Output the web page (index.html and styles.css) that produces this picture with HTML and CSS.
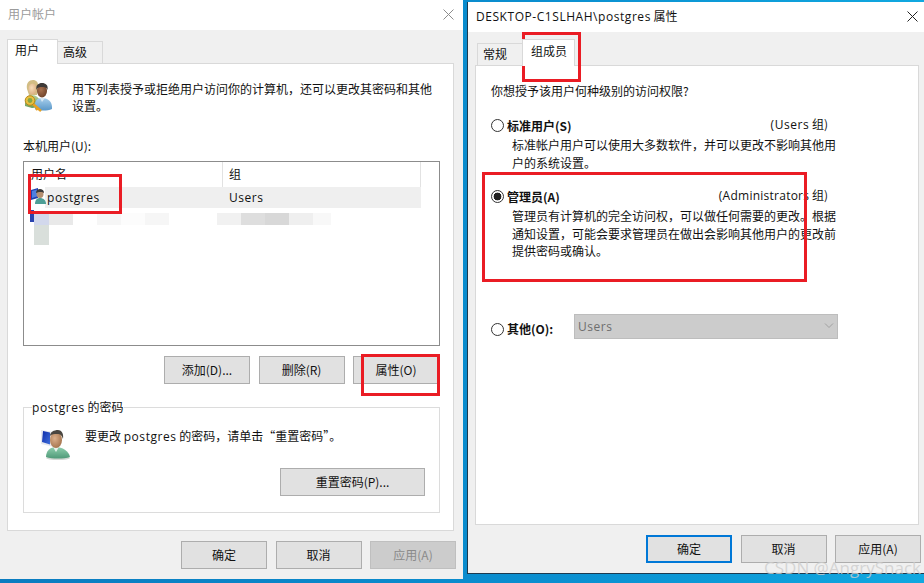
FILE: index.html
```html
<!DOCTYPE html>
<html lang="zh-CN">
<head>
<meta charset="utf-8">
<title>用户帐户</title>
<link rel="stylesheet" href="styles.css">
</head>
<body>
<div class="desktop">

  <section class="window win-users">
    <header class="titlebar titlebar-off">
      <span class="title">用户帐户</span>
      <svg class="close" width="11" height="11" viewBox="0 0 11 11"><path d="M.5.5l10 10M10.500.5l-10 10" stroke="#8c8c8c" fill="none"/></svg>
    </header>
    <div class="dialog">
      <div class="tabs">
        <div class="tab tab-on tab-users">用户</div>
        <div class="tab tab-adv">高级</div>
      </div>
      <div class="panel panel-users">
        <div class="intro">
          <svg class="icon-users" width="33" height="33" viewBox="0 0 33 33">
            <defs>
              <linearGradient id="shirtB" x1="0" y1="0" x2="0" y2="1"><stop offset="0" stop-color="#a8cfec"/><stop offset="1" stop-color="#5a97c8"/></linearGradient>
              <linearGradient id="shirtG" x1="0" y1="0" x2="0" y2="1"><stop offset="0" stop-color="#b4d29a"/><stop offset="1" stop-color="#6c9c58"/></linearGradient>
              <radialGradient id="skinA" cx=".4" cy=".4" r=".7"><stop offset="0" stop-color="#f6dcba"/><stop offset="1" stop-color="#d8ac7c"/></radialGradient>
              <radialGradient id="skinB" cx=".4" cy=".4" r=".7"><stop offset="0" stop-color="#a87250"/><stop offset="1" stop-color="#6a4028"/></radialGradient>
            </defs>
            <path d="M2 23c0-5 3-8 7-8s8 3 8 8v4l-8 1-7-2z" fill="url(#shirtG)"/>
            <path d="M4 9c-1-6 2-9 6-9 3 0 6 2 5 8l-1 7H6z" fill="#d2bd84"/>
            <ellipse cx="9.500" cy="9" rx="4" ry="5.500" fill="url(#skinA)"/>
            <path d="M12 29c-1-8 2-11 7-11s10 3 10 9v2c-5 2-12 2-17 0z" fill="url(#shirtB)"/>
            <path d="M17 18l2 4 3-4z" fill="#d8e8f4"/>
            <ellipse cx="19" cy="11" rx="5" ry="6.500" fill="url(#skinB)"/>
            <path d="M13.500 10c-1-5 2-7 5.500-7s6.500 2 5.500 7c-1-3-3-3-5.500-3s-4.500 0-5.500 3z" fill="#3e3a38"/>
            <path d="M10 24l8 7M15 28l-2 2" stroke="#e8a020" stroke-width="2.400" fill="none"/>
            <circle cx="7" cy="20.500" r="4.800" fill="#e8c040" stroke="#b8891c"/>
            <circle cx="7" cy="20.500" r="2.400" fill="#86a646"/>
          </svg>
          <p class="intro-text">用下列表授予或拒绝用户访问你的计算机，还可以更改其密码和其他设置。</p>
        </div>
        <div class="list-label">本机用户(U):</div>
        <div class="listview">
          <div class="lv-head">
            <div class="col-name">用户名</div>
            <div class="col-group">组</div>
          </div>
          <div class="lv-row">
            <svg class="icon-small" width="15" height="16" viewBox="0 0 15 16">
              <path d="M0 2l7-2v10l-7 2z" fill="#1f3fb0"/>
              <path d="M1 3l5-1.500v7l-5 1.500z" fill="#4f7fe0"/>
              <path d="M4 16c0-4 2-6 5-6s6 2 6 6z" fill="#4e9f96"/>
              <ellipse cx="9" cy="6" rx="3.500" ry="4" fill="#b58f70"/>
              <path d="M5 5c0-3 2-4 4-4s4 1 4 4c-1-1.500-6-1.500-8 0z" fill="#3a3a3a"/>
            </svg>
            <span class="cell-name">postgres</span>
            <span class="cell-group">Users</span>
          </div>
          <svg class="mosaic" width="410" height="40" viewBox="0 0 410 40">
            <rect x="6" y="0" width="4" height="12" fill="#2a44b0"/>
            <rect x="10" y="3" width="15" height="12" fill="#d2d8ec"/>
            <rect x="10" y="15" width="15" height="20" fill="#d9dfdb"/>
            <rect x="25" y="3" width="24" height="12" fill="#e9e9e9"/>
            <rect x="73" y="3" width="24" height="12" fill="#f6f6f6"/>
            <rect x="97" y="3" width="24" height="12" fill="#fcfcfc"/>
            <rect x="121" y="3" width="24" height="12" fill="#f6f6f6"/>
            <rect x="193" y="3" width="24" height="12" fill="#f1f1f1"/>
            <rect x="217" y="3" width="24" height="12" fill="#dedede"/>
            <rect x="241" y="3" width="24" height="12" fill="#d8d8d8"/>
            <rect x="265" y="3" width="24" height="12" fill="#efefef"/>
            <rect x="289" y="3" width="18" height="12" fill="#f8f8f8"/>
          </svg>
        </div>
        <div class="list-actions">
          <button class="btn">添加(D)...</button>
          <button class="btn">删除(R)</button>
          <button class="btn">属性(O)</button>
        </div>
        <fieldset class="pw-group">
          <legend class="pw-legend"><span class="lat">postgres</span> 的密码</legend>
          <div class="pw-line">
            <svg class="icon-pw" width="31" height="31" viewBox="0 0 31 31">
              <defs>
                <linearGradient id="scr" x1="0" y1="0" x2="1" y2="1"><stop offset="0" stop-color="#0c2aa8"/><stop offset="1" stop-color="#3f6fdc"/></linearGradient>
                <linearGradient id="teal" x1="0" y1="0" x2="0" y2="1"><stop offset="0" stop-color="#8fcfae"/><stop offset="1" stop-color="#4f9a78"/></linearGradient>
                <radialGradient id="skinC" cx=".4" cy=".4" r=".7"><stop offset="0" stop-color="#dcb08c"/><stop offset="1" stop-color="#a06f48"/></radialGradient>
              </defs>
              <path d="M1 1l13 2v15L1 15z" fill="#e6e9f0"/>
              <path d="M3 2l7 1.500v12L2 13z" fill="url(#scr)"/>
              <ellipse cx="18" cy="29" rx="12" ry="2" fill="#d4d8d4"/>
              <path d="M6 28c0-6 4-10 10-10s13 4 14 10c-6 2-18 2-24 0z" fill="url(#teal)"/>
              <path d="M13 18l3 5 3-5z" fill="#e6f3ec"/>
              <ellipse cx="16" cy="11" rx="6" ry="8" fill="url(#skinC)"/>
              <path d="M10 7c0-4 4-6 8-6 3 0 6 3 5 9-1-3-2-5-6-5-3 0-5 0-7 2z" fill="#4a4640"/>
            </svg>
            <p class="pw-text">要更改 <span class="lat">postgres</span> 的密码，请单击“重置密码”。</p>
          </div>
          <div class="pw-actions"><button class="btn btn-wide">重置密码(P)...</button></div>
        </fieldset>
      </div>
      <div class="footer footer-users">
        <button class="btn">确定</button>
        <button class="btn">取消</button>
        <button class="btn btn-off">应用(A)</button>
      </div>
    </div>
  </section>

  <section class="window win-props">
    <header class="titlebar">
      <span class="title title-on"><span class="lat">DESKTOP-C1SLHAH\postgres</span> 属性</span>
      <svg class="close" width="11" height="11" viewBox="0 0 11 11"><path d="M.5.5l10 10M10.500.5l-10 10" stroke="#222" fill="none"/></svg>
    </header>
    <div class="dialog dialog-props">
      <div class="tabs tabs-props">
        <div class="tab tab-general">常规</div>
        <div class="tab tab-on tab-member">组成员</div>
      </div>
      <div class="panel panel-props">
        <p class="question">你想授予该用户何种级别的访问权限?</p>
        <div class="option opt-std">
          <div class="opt-head">
            <span class="radio"></span>
            <span class="opt-name">标准用户(S)</span>
            <span class="opt-scope"><span class="lat">(Users</span> 组)</span>
          </div>
          <p class="opt-desc">标准帐户用户可以使用大多数软件，并可以更改不影响其他用户的系统设置。</p>
        </div>
        <div class="option opt-admin">
          <div class="opt-head">
            <span class="radio radio-on"></span>
            <span class="opt-name">管理员(A)</span>
            <span class="opt-scope"><span class="lat lat-tight">(Administrators</span> 组)</span>
          </div>
          <p class="opt-desc">管理员有计算机的完全访问权，可以做任何需要的更改。根据通知设置，可能会要求管理员在做出会影响其他用户的更改前提供密码或确认。</p>
        </div>
        <div class="opt-other">
          <span class="radio"></span>
          <span class="opt-name other-name">其他(O):</span>
          <div class="combo">
            <span class="lat">Users</span>
            <svg width="10" height="6" viewBox="0 0 10 6"><path d="M1 .5l4 4 4-4" stroke="#a0a0a0" fill="none"/></svg>
          </div>
        </div>
      </div>
      <div class="footer footer-props">
        <button class="btn btn-default">确定</button>
        <button class="btn">取消</button>
        <button class="btn">应用(A)</button>
      </div>
    </div>
  </section>

  <div class="mark mark-user"></div>
  <div class="mark mark-prop"></div>
  <div class="mark mark-tab"></div>
  <div class="mark mark-admin"></div>
  <div class="watermark">CSDN @AngrySnack</div>
</div>
</body>
</html>
```
FILE: styles.css
```css
* { box-sizing: border-box; }
html, body { margin: 0; height: 100%; }
body {
  font-family: "Noto Sans CJK SC", "Open Sans", sans-serif;
  font-size: 12px;
  color: #111;
  overflow: hidden;
}
p { margin: 0; }
.lat { font-family: "Open Sans", "Noto Sans CJK SC", sans-serif; letter-spacing: .55px; }
.lat-tight { letter-spacing: .25px; }

.desktop {
  position: relative;
  width: 924px;
  height: 583px;
  background: linear-gradient(90deg, #0a7cc0, #0a8fd0 60%, #10a8e0);
  overflow: hidden;
}

.window {
  position: absolute;
  display: flex;
  flex-direction: column;
}
.win-users { left: 0; top: 0; width: 463px; height: 579px; }
.win-props {
  left: 467px; top: 2px; width: 460px; height: 572px;
  border-left: 1px solid #1c3a50;
  border-bottom: 1px solid #1c3a50;
}

.titlebar {
  height: 30px;
  flex: none;
  background: #fff;
  display: flex;
  align-items: center;
  justify-content: space-between;
  padding: 0 6px 0 8px;
}
.win-props .titlebar { padding: 0 7px 0 8px; }
.title { font-size: 12px; color: #9b9b9b; margin-bottom: 4px; }
.title-on { color: #111; margin-bottom: 2px; }
.close { flex: none; margin-bottom: 2px; }
.win-users .close { margin-right: 3px; }
.win-props .close { margin-right: 2px; }

.dialog {
  flex: 1;
  background: #f0f0f0;
  display: flex;
  flex-direction: column;
  padding: 9px 9px 0 7px;
  min-height: 0;
}
.dialog-props { padding: 7px 0 0 7px; }

.tabs { display: flex; align-items: flex-end; height: 24px; flex: none; }
.tabs-props { height: 26px; }
.tab {
  height: 22px;
  background: #f0f0f0;
  border: 1px solid #d9d9d9;
  border-bottom: 0;
  display: flex;
  align-items: center;
  justify-content: flex-start;
  padding-bottom: 2px;
}
.tab-on {
  height: 25px;
  background: #fff;
  margin-bottom: -1px;
  position: relative;
  z-index: 1;
  align-items: flex-start;
  padding: 1px 0 0;
}
.tab-users { width: 51px; padding-left: 7px; }
.tab-adv { width: 45px; border-left: 0; padding-left: 5px; }
.tab-general { width: 45px; margin-left: 2px; border-right: 0; padding-left: 5px; }
.tab-member { width: 53px; height: 27px; padding: 2px 0 0 8px; }

.panel {
  background: #fff;
  border: 1px solid #d9d9d9;
  flex: none;
}
.panel-users {
  width: 447px;
  height: 468px;
  padding: 16px 14px 0 15px;
}
.panel-props {
  width: 444px;
  height: 460px;
  padding: 16px 0 0 15px;
}

.intro { display: flex; height: 58px; }
.icon-users { flex: none; margin-right: 16px; filter: blur(.3px); }
.intro-text { width: 366px; line-height: 17px; }
.list-label { height: 15px; line-height: 15px; }

.listview {
  position: relative;
  width: 417px;
  height: 185px;
  margin-top: 8px;
  border: 1px solid #8c8c8c;
  padding: 0 18px 0 0;
}
.lv-head {
  display: flex;
  height: 25px;
  line-height: 24px;
}
.col-name { width: 199px; padding-left: 7px; border-right: 1px solid #e2e2e2; }
.col-group { width: 198px; padding-left: 6px; border-right: 1px solid #e2e2e2; }
.lv-row {
  position: relative;
  display: flex;
  align-items: center;
  height: 21px;
  margin-left: 21px;
  background: #efefef;
}
.icon-small { position: absolute; left: -14px; top: 1px; filter: blur(.3px); }
.cell-name { width: 184px; padding-left: 2px; font-family: "Open Sans", sans-serif; letter-spacing: .55px; }
.cell-group { font-family: "Open Sans", sans-serif; letter-spacing: .55px; }
.mosaic { position: absolute; left: 0; top: 48px; }

.list-actions {
  display: flex;
  justify-content: flex-end;
  gap: 8.500px;
  width: 416px;
  margin-top: 10px;
}
.btn {
  width: 86px;
  height: 28px;
  padding: 0 0 2px;
  margin: 0;
  background: #e1e1e1;
  border: 1px solid #adadad;
  font: inherit;
  color: #111;
}
.btn-off { background: #cccccc; border-color: #bfbfbf; color: #8a8a8a; }
.btn-default { border: 2px solid #0078d7; }
.btn-wide { width: 145px; }

.pw-group {
  width: 417px;
  height: 113px;
  margin: 16px 0 0;
  padding: 0;
  border: 1px solid #dcdcdc;
}
.pw-legend { margin-left: 8px; padding: 0; line-height: 14px; height: 14px; }
.pw-line { display: flex; align-items: flex-start; padding: 15px 0 0 16px; height: 54px; }
.icon-pw { flex: none; margin-right: 14px; filter: blur(.3px); }
.pw-text { line-height: 18px; margin-top: -2px; }
.pw-actions { display: flex; justify-content: flex-end; padding-right: 14px; }

.footer {
  display: flex;
  justify-content: flex-end;
  gap: 8.500px;
  flex: none;
}
.footer-users { margin-top: 10px; margin-right: -2px; }
.footer-props { margin-top: 10px; width: 446px; }

.question { line-height: 18px; height: 18px; }
.option { position: relative; width: 330px; }
.opt-std { margin-top: 16px; }
.opt-admin { margin-top: 16px; }
.opt-head { display: flex; align-items: center; height: 18px; position: relative; }
.radio {
  flex: none;
  width: 13px;
  height: 13px;
  border: 1px solid #333;
  border-radius: 50%;
  background: #fff;
  margin-right: 3px;
  display: block;
}
.radio-on { background: radial-gradient(circle, #222 0 3.600px, #fff 4.200px); }
.opt-name { font-weight: 700; }
.opt-scope { position: absolute; right: -7px; top: 0; line-height: 16px; }
.opt-desc { margin: 2px 0 0 21px; width: 326px; line-height: 17.500px; }
.opt-other { display: flex; align-items: flex-start; margin-top: 54px; height: 25px; }
.opt-other .radio { margin-top: 9px; }
.other-name { width: 67px; line-height: 18px; margin-top: 6px; }
.combo {
  width: 264px;
  height: 25px;
  background: #cccccc;
  border: 1px solid #bdbdbd;
  color: #6e6e6e;
  display: flex;
  align-items: center;
  justify-content: space-between;
  padding: 0 3px;
}

.mark {
  position: absolute;
  border: 3px solid #ea1c24;
  pointer-events: none;
}
.mark-user { left: 28px; top: 174px; width: 94px; height: 40px; }
.mark-prop { left: 361px; top: 354px; width: 79px; height: 42px; }
.mark-tab { left: 522px; top: 32px; width: 59px; height: 50px; }
.mark-admin { left: 482px; top: 172px; width: 325px; height: 110px; }

.watermark {
  position: absolute;
  right: 3px;
  top: 559px;
  font-family: "Open Sans", sans-serif;
  font-size: 17px;
  line-height: 17px;
  color: rgba(205, 205, 205, .8);
  white-space: nowrap;
}
```
